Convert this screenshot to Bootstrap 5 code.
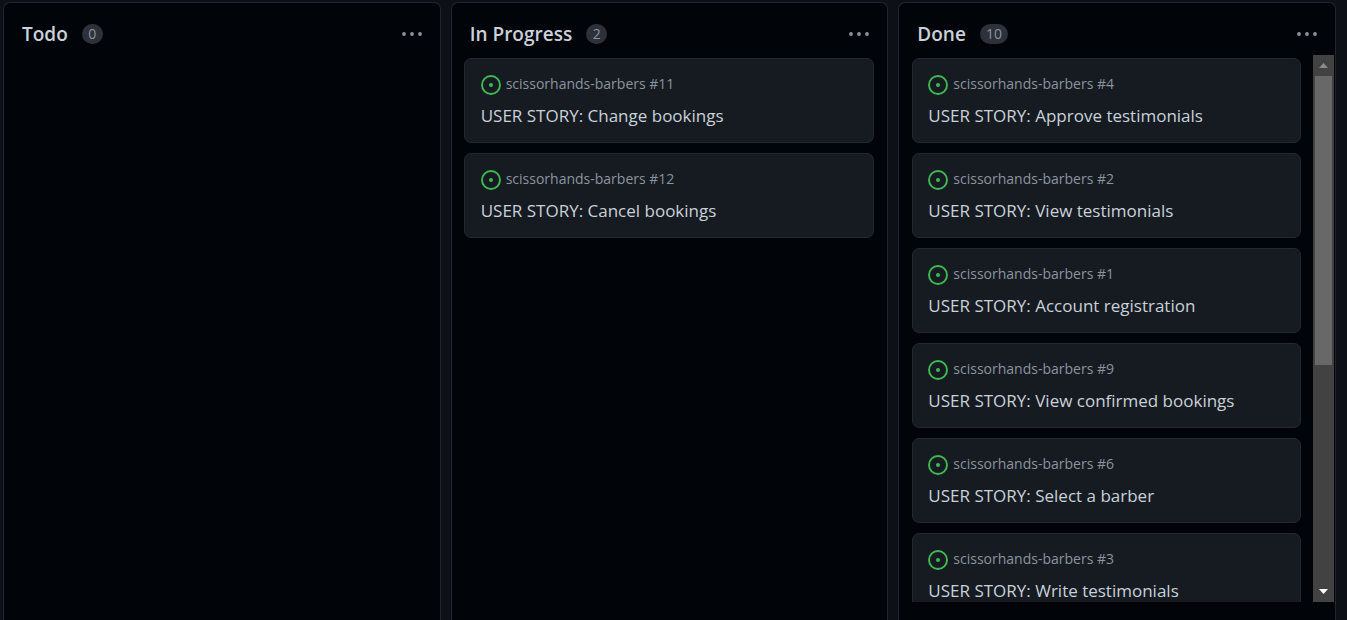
<!DOCTYPE html>
<html lang="en">
<head>
<meta charset="utf-8">
<meta name="viewport" content="width=device-width, initial-scale=1">
<title>Project board</title>
<link href="https://cdn.jsdelivr.net/npm/bootstrap@5.3.0/dist/css/bootstrap.min.css" rel="stylesheet">
<style>
  body { background: #0d1117; color: #c9d1d9; font-family: "Segoe UI", "Open Sans", "Noto Sans", sans-serif; }
  .board { gap: 10px; padding: 2px 11px 0 3px; }
  .lane { flex: 1 1 0; min-width: 0; background: #010409; border: 1px solid #21262d; border-bottom: 0; border-radius: 7px 7px 0 0; padding-bottom: 18px; }
  .lane-head { flex: 0 0 52px; padding: 9px 17px 0 18px; gap: 14px; }
  .lane-title { font-size: 19px; line-height: 28px; font-weight: 600; padding-top: 1px; }
  .count { background: #2d3139; color: #8b949e; font-size: 14px; line-height: 20px; font-weight: 400; padding: 0 6px; min-width: 21px; }
  .menu-btn { color: #8b949e; line-height: 0; }
  .lane-body { min-height: 0; }
  .stack { gap: 10px; padding: 3px 13px 0 12px; overflow: hidden; min-width: 0; }
  .stack.scrolls { padding-right: 12px; padding-left: 13px; }
  .issue { flex: 0 0 85px; background: #161b22; border: 1px solid #23282f; border-radius: 7px; padding: 13px 16px 0 16px; color: inherit; }
  .scrolls .issue { padding-left: 15px; }
  .issue-ref { gap: 5px; height: 26px; color: #8b949e; font-size: 14px; line-height: 24px; }
  .issue-ref svg { margin-top: 3px; flex: none; }
  .issue-link { color: #c9d1d9; font-size: 17px; line-height: 24px; margin-top: 6px; }
  .scroller { width: 21px; margin-right: 1px; background: #424242; }
  .scroller .step { height: 21px; line-height: 0; }
  .thumb { height: 289px; margin: 0 2px; background: #686868; }
</style>
</head>
<body>
<svg class="d-none" aria-hidden="true">
  <symbol id="open" viewBox="0 0 20 20"><circle cx="10" cy="10" r="9" fill="none" stroke="#3fb950" stroke-width="1.9"/><circle cx="10" cy="10" r="2" fill="#3fb950"/></symbol>
  <symbol id="dots" viewBox="0 0 22 6"><g fill="currentColor"><circle cx="3" cy="3" r="1.9"/><circle cx="11" cy="3" r="1.9"/><circle cx="19" cy="3" r="1.9"/></g></symbol>
</svg>
<main class="board d-flex vh-100 overflow-hidden">
  <section class="lane d-flex flex-column">
    <header class="lane-head d-flex align-items-center">
      <h2 class="lane-title m-0">Todo</h2><span class="count badge rounded-pill">0</span>
      <button type="button" class="menu-btn btn p-0 border-0 ms-auto" aria-label="Todo actions"><svg width="22" height="6"><use href="#dots"/></svg></button>
    </header>
  </section>
  <section class="lane d-flex flex-column">
    <header class="lane-head d-flex align-items-center">
      <h2 class="lane-title m-0">In Progress</h2><span class="count badge rounded-pill">2</span>
      <button type="button" class="menu-btn btn p-0 border-0 ms-auto" aria-label="In Progress actions"><svg width="22" height="6"><use href="#dots"/></svg></button>
    </header>
    <div class="lane-body d-flex flex-grow-1">
      <div class="stack d-flex flex-column flex-grow-1">
        <article class="issue card"><div class="issue-ref d-flex"><svg width="20" height="20"><use href="#open"/></svg><span>scissorhands-barbers #11</span></div><a href="#" class="issue-link text-decoration-none">USER STORY: Change bookings</a></article>
        <article class="issue card"><div class="issue-ref d-flex"><svg width="20" height="20"><use href="#open"/></svg><span>scissorhands-barbers #12</span></div><a href="#" class="issue-link text-decoration-none">USER STORY: Cancel bookings</a></article>
      </div>
    </div>
  </section>
  <section class="lane d-flex flex-column">
    <header class="lane-head d-flex align-items-center">
      <h2 class="lane-title m-0">Done</h2><span class="count badge rounded-pill">10</span>
      <button type="button" class="menu-btn btn p-0 border-0 ms-auto" aria-label="Done actions"><svg width="22" height="6"><use href="#dots"/></svg></button>
    </header>
    <div class="lane-body d-flex flex-grow-1">
      <div class="stack scrolls d-flex flex-column flex-grow-1">
        <article class="issue card"><div class="issue-ref d-flex"><svg width="20" height="20"><use href="#open"/></svg><span>scissorhands-barbers #4</span></div><a href="#" class="issue-link text-decoration-none">USER STORY: Approve testimonials</a></article>
        <article class="issue card"><div class="issue-ref d-flex"><svg width="20" height="20"><use href="#open"/></svg><span>scissorhands-barbers #2</span></div><a href="#" class="issue-link text-decoration-none">USER STORY: View testimonials</a></article>
        <article class="issue card"><div class="issue-ref d-flex"><svg width="20" height="20"><use href="#open"/></svg><span>scissorhands-barbers #1</span></div><a href="#" class="issue-link text-decoration-none">USER STORY: Account registration</a></article>
        <article class="issue card"><div class="issue-ref d-flex"><svg width="20" height="20"><use href="#open"/></svg><span>scissorhands-barbers #9</span></div><a href="#" class="issue-link text-decoration-none">USER STORY: View confirmed bookings</a></article>
        <article class="issue card"><div class="issue-ref d-flex"><svg width="20" height="20"><use href="#open"/></svg><span>scissorhands-barbers #6</span></div><a href="#" class="issue-link text-decoration-none">USER STORY: Select a barber</a></article>
        <article class="issue card"><div class="issue-ref d-flex"><svg width="20" height="20"><use href="#open"/></svg><span>scissorhands-barbers #3</span></div><a href="#" class="issue-link text-decoration-none">USER STORY: Write testimonials</a></article>
      </div>
      <div class="scroller d-flex flex-column flex-shrink-0" aria-hidden="true">
        <div class="step d-flex align-items-center justify-content-center"><svg width="9" height="5"><path d="M0 5 4.500 0 9 5z" fill="#8b8b8b"/></svg></div>
        <div class="thumb"></div>
        <div class="step d-flex align-items-center justify-content-center mt-auto"><svg width="9" height="5"><path d="M0 0h9L4.500 5z" fill="#fff"/></svg></div>
      </div>
    </div>
  </section>
</main>
<script src="https://cdn.jsdelivr.net/npm/bootstrap@5.3.0/dist/js/bootstrap.bundle.min.js"></script>
</body>
</html>
